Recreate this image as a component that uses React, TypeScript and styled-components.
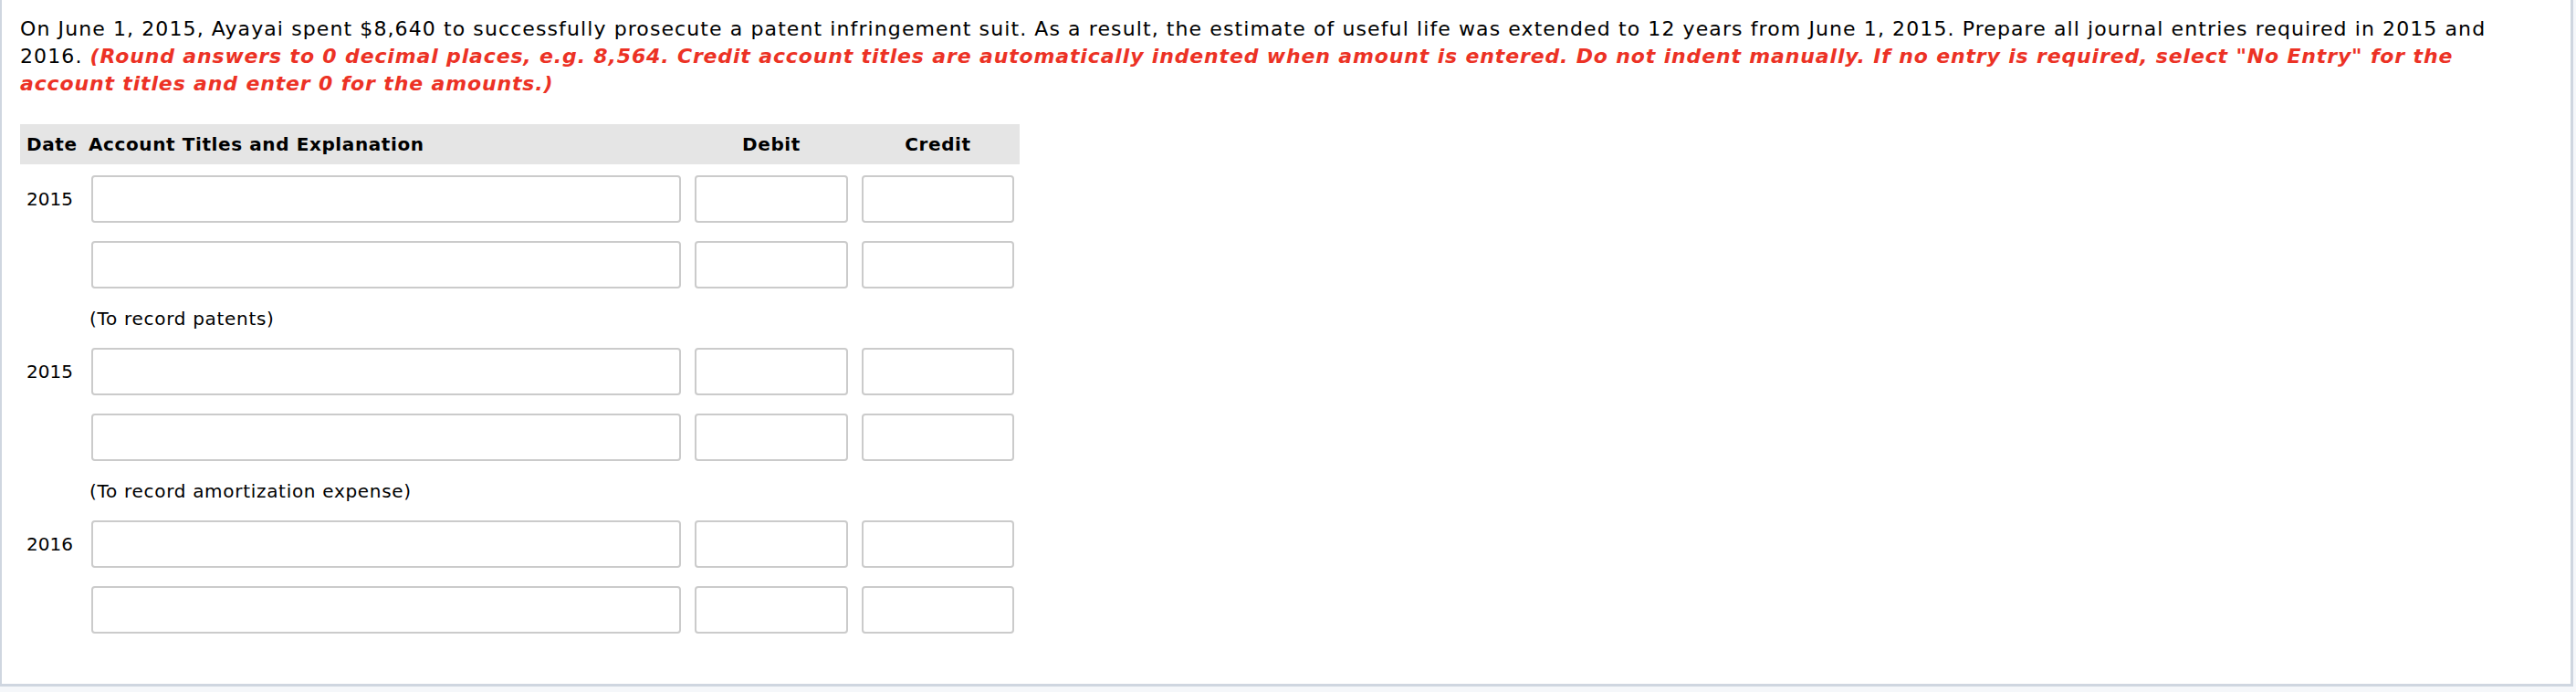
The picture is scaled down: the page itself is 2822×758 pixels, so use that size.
import React from "react";
import styled, { createGlobalStyle } from "styled-components";

const Global = createGlobalStyle`
  html, body { margin: 0; padding: 0; background: #f5f7fa; }
  body { font-family: "DejaVu Sans", Verdana, sans-serif; color: #000; }
`;

const Panel = styled.div`
  box-sizing: border-box;
  width: 2819px;
  height: 752px;
  background: #fff;
  border-left: 2px solid #cfd6e0;
  border-right: 3px solid #cfd6e0;
  border-bottom: 3px solid #cfd6e0;
  padding: 17px 20px 0 20px;
`;

const Question = styled.p`
  margin: 0;
  font-size: 22px;
  line-height: 30px;
  letter-spacing: 1.1px;
  white-space: nowrap;
`;

const Hint = styled.em`
  color: #ec3225;
  font-weight: bold;
  letter-spacing: 0.85px;
`;

const Table = styled.div`
  margin-top: 29px;
  width: 1095px;
  font-size: 20px;
  letter-spacing: 0.7px;
`;

const grid = `
  display: grid;
  grid-template-columns: 63px 646px 168px 167px;
  column-gap: 15px;
  align-items: center;
`;

const Header = styled.div`
  ${grid}
  height: 44px;
  background: #e5e5e5;
  padding-right: 6px;
  font-weight: bold;
  letter-spacing: 0.6px;
  margin-bottom: 2px;
`;

const HeadCell = styled.div<{ $center?: boolean; $shift?: number }>`
  text-align: ${(p) => (p.$center ? "center" : "left")};
  margin-left: ${(p) => p.$shift ?? 0}px;
  white-space: nowrap;
`;

const Row = styled.div`
  ${grid}
  padding: 10px 0;
`;

const DateLabel = styled.div`
  padding-left: 7px;
  letter-spacing: 0;
`;

const Field = styled.input`
  box-sizing: border-box;
  height: 52px;
  width: 100%;
  border: 2px solid #cbcbcb;
  border-radius: 4px;
  background: #fff;
  outline: none;
  font: inherit;
`;

const Caption = styled.div`
  ${grid}
  height: 45px;
`;

const CaptionText = styled.div`
  grid-column: 2 / 3;
  margin-left: -2px;
`;

type Entry = { date: string; caption?: string };

const entries: Entry[] = [
  { date: "2015", caption: "(To record patents)" },
  { date: "2015", caption: "(To record amortization expense)" },
  { date: "2016" },
];

const JournalRow = ({ date }: { date?: string }) => (
  <Row>
    <DateLabel>{date ?? ""}</DateLabel>
    <Field />
    <Field />
    <Field />
  </Row>
);

export default function App() {
  return (
    <>
      <Global />
      <Panel>
        <Question>
          On June 1, 2015, Ayayai spent $8,640 to successfully prosecute a patent infringement suit. As a result, the
          estimate of useful life was extended to 12 years from June 1, 2015. Prepare all journal entries required in
          2015 and
          <br />
          2016.{" "}
          <Hint>
            (Round answers to 0 decimal places, e.g. 8,564. Credit account titles are automatically indented when amount
            is entered. Do not indent manually. If no entry is required, select "No Entry" for the
            <br />
            account titles and enter 0 for the amounts.)
          </Hint>
        </Question>
        <Table>
          <Header>
            <HeadCell $shift={7}>Date</HeadCell>
            <HeadCell $shift={-3}>Account Titles and Explanation</HeadCell>
            <HeadCell $center>Debit</HeadCell>
            <HeadCell $center>Credit</HeadCell>
          </Header>
          {entries.map((e, i) => (
            <React.Fragment key={i}>
              <JournalRow date={e.date} />
              <JournalRow />
              {e.caption && (
                <Caption>
                  <CaptionText>{e.caption}</CaptionText>
                </Caption>
              )}
            </React.Fragment>
          ))}
        </Table>
      </Panel>
    </>
  );
}
